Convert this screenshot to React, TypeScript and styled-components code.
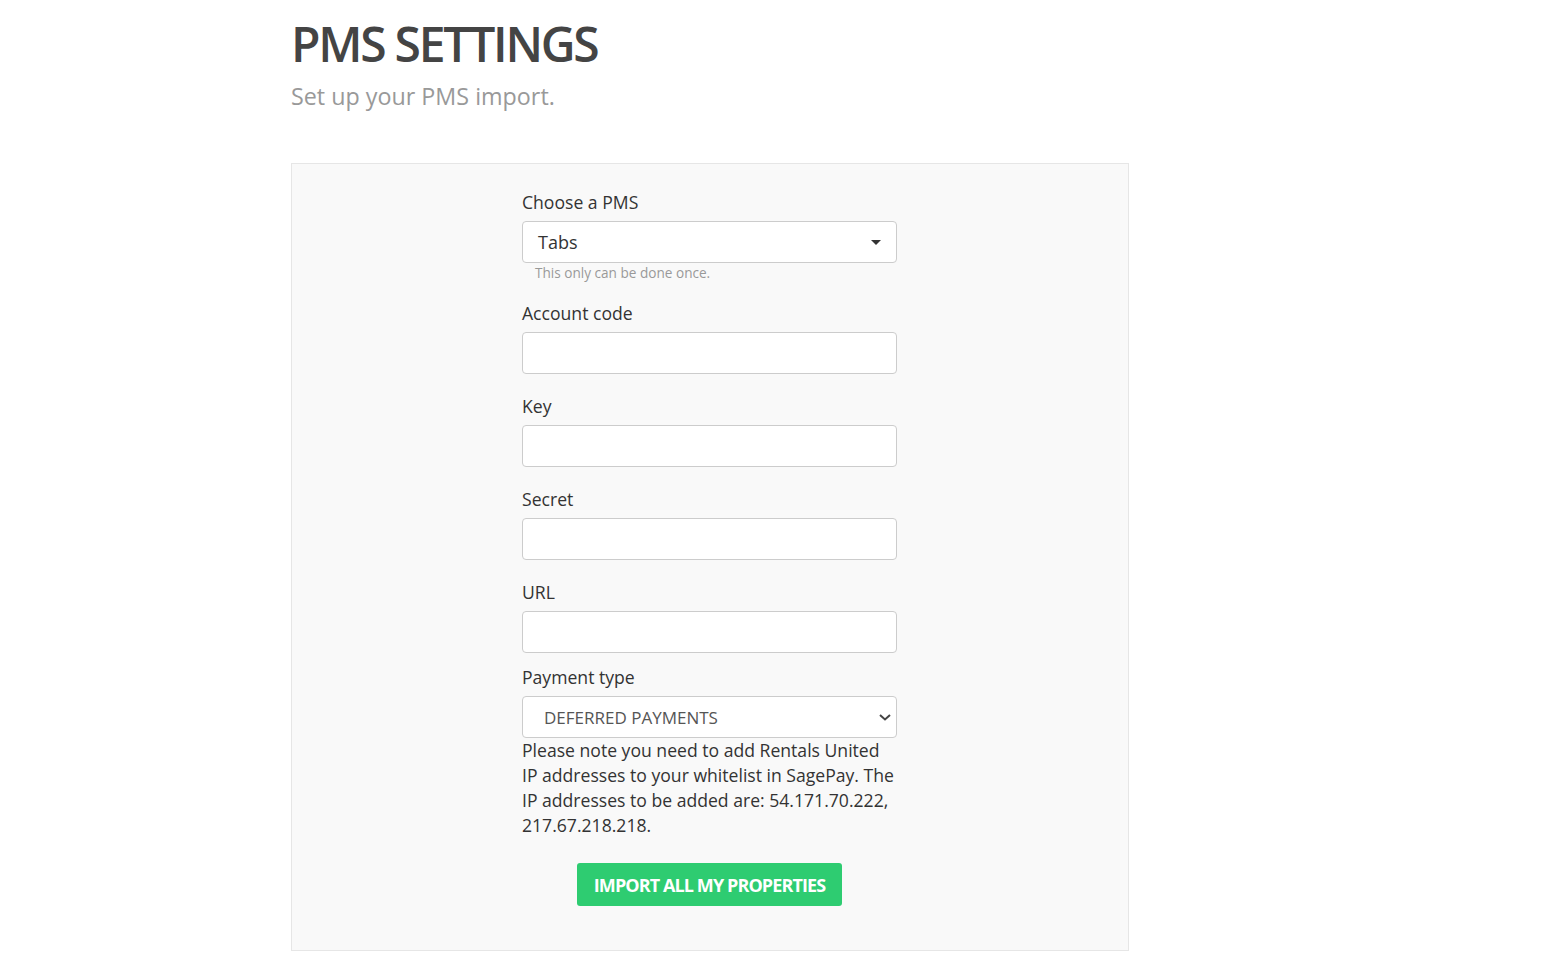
import React from "react";
import styled, { createGlobalStyle } from "styled-components";

const Global = createGlobalStyle`
  html, body { margin: 0; padding: 0; background: #fff; }
  body { font-family: "Open Sans", "Liberation Sans", sans-serif; color: #333; }
  * { box-sizing: border-box; }
`;

const Page = styled.div`
  width: 838px;
  margin-left: 291px;
  padding-top: 14px;
`;

const Title = styled.h1`
  margin: 0;
  font-size: 48px;
  line-height: 60px;
  font-weight: 600;
  letter-spacing: -2.25px;
  color: #444;
`;

const Subtitle = styled.p`
  margin: 6px 0 0;
  font-size: 23.3px;
  line-height: 32px;
  color: #999;
`;

const Panel = styled.div`
  margin-top: 51px;
  background: #f9f9f9;
  border: 1px solid #e6e6e6;
  padding: 26px 0 44px 230px;
`;

const Form = styled.div`
  width: 375px;
  display: flex;
  flex-direction: column;
`;

const Group = styled.div<{ $mb?: number }>`
  display: flex;
  flex-direction: column;
  margin-bottom: ${(p) => (p.$mb ?? 20)}px;
`;

const Label = styled.label`
  font-size: 17.6px;
  line-height: 24px;
  color: #333;
  margin-bottom: 7px;
`;

const Input = styled.div`
  height: 42px;
  background: #fff;
  border: 1px solid #ccc;
  border-radius: 4px;
`;

const SelectBox = styled.div<{ $pad: number }>`
  height: 42px;
  background: #fff;
  border: 1px solid #ccc;
  border-radius: 4px;
  display: flex;
  align-items: center;
  justify-content: space-between;
  padding: 0 ${(p) => p.$pad}px 0 ${(p) => p.$pad}px;
`;

const SelectText = styled.span<{ $size: number; $color: string }>`
  font-size: ${(p) => p.$size}px;
  color: ${(p) => p.$color};
`;

const Hint = styled.div`
  font-size: 13.6px;
  line-height: 18px;
  color: #999;
  padding-left: 13px;
  margin-top: 1px;
`;

const Note = styled.p`
  margin: 0;
  font-size: 17.6px;
  line-height: 25px;
  color: #333;
`;

const ButtonRow = styled.div`
  display: flex;
  justify-content: center;
  margin-top: 25px;
`;

const Button = styled.button`
  height: 43px;
  padding: 0 16.5px;
  border: none;
  border-radius: 3px;
  background: #2ecc71;
  color: #fff;
  font-family: "Open Sans", "Liberation Sans", sans-serif;
  font-weight: 700;
  font-size: 18px;
  letter-spacing: -0.9px;
`;

const ChevronWrap = styled.span`
  display: flex;
  margin-right: -16px;
`;

export default function App() {
  return (
    <>
      <Global />
      <Page>
        <Title>PMS SETTINGS</Title>
        <Subtitle>Set up your PMS import.</Subtitle>
        <Panel>
          <Form>
            <Group $mb={19}>
              <Label>Choose a PMS</Label>
              <SelectBox $pad={15}>
                <SelectText $size={18} $color="#333">Tabs</SelectText>
                <svg width="10" height="5" viewBox="0 0 10 5">
                  <path d="M0 0 L10 0 L5 5 Z" fill="#333" />
                </svg>
              </SelectBox>
              <Hint>This only can be done once.</Hint>
            </Group>
            <Group>
              <Label>Account code</Label>
              <Input />
            </Group>
            <Group>
              <Label>Key</Label>
              <Input />
            </Group>
            <Group>
              <Label>Secret</Label>
              <Input />
            </Group>
            <Group $mb={12}>
              <Label>URL</Label>
              <Input />
            </Group>
            <Group $mb={0}>
              <Label>Payment type</Label>
              <SelectBox $pad={21}>
                <SelectText $size={17} $color="#555">DEFERRED PAYMENTS</SelectText>
                <ChevronWrap>
                  <svg width="12" height="7" viewBox="0 0 12 7">
                    <path d="M1 1 L6 5.5 L11 1" fill="none" stroke="#444" strokeWidth="2" />
                  </svg>
                </ChevronWrap>
              </SelectBox>
              <Note>
                Please note you need to add Rentals United IP addresses to your whitelist in SagePay. The IP addresses to be added are: 54.171.70.222, 217.67.218.218.
              </Note>
            </Group>
            <ButtonRow>
              <Button>IMPORT ALL MY PROPERTIES</Button>
            </ButtonRow>
          </Form>
        </Panel>
      </Page>
    </>
  );
}
